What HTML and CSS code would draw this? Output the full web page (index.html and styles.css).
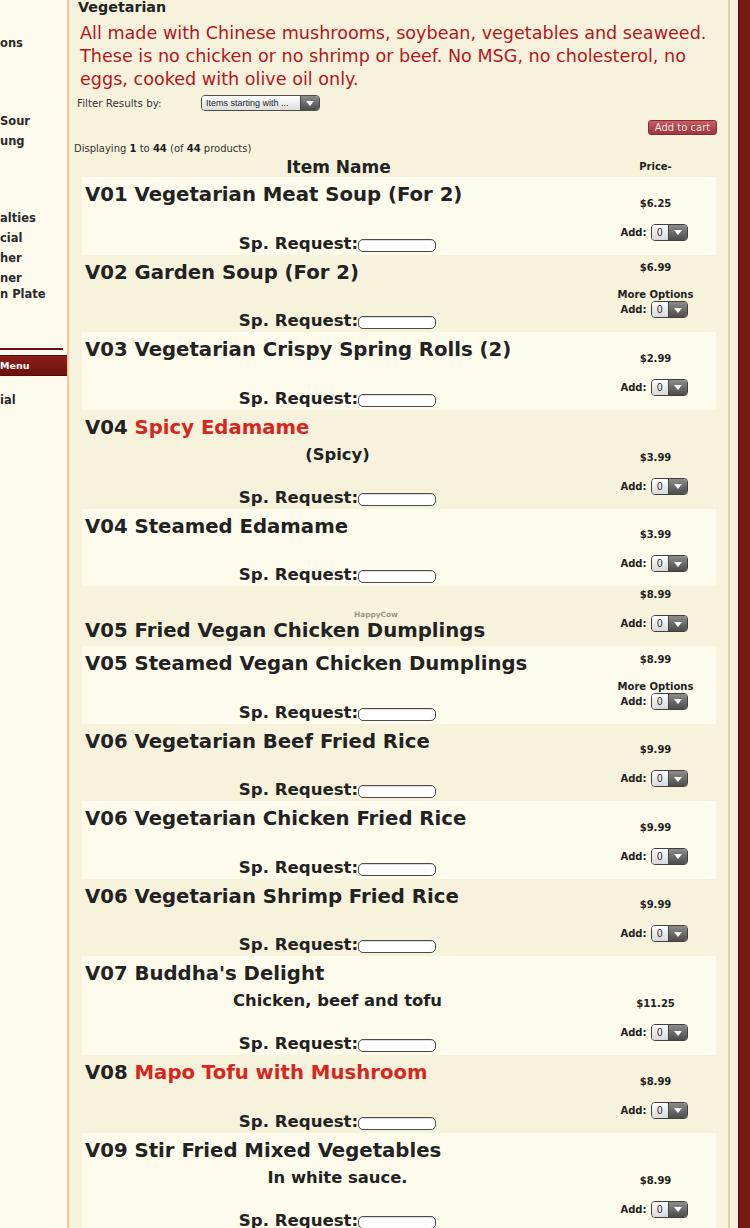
FILE: index.html
```html
<!DOCTYPE html>
<html lang="en">
<head>
    <meta charset="UTF-8">
    <meta name="viewport" content="width=device-width, initial-scale=1.0">
    <title>Vegetarian - Menu</title>
    <link rel="stylesheet" href="styles.css">
</head>
<body>
<div class="page">
    <!-- left category column (cut off by the crop) -->
    <aside class="sidebar">
        <div class="side-link">ons</div>
        <div class="side-link sep-a">Sour</div>
        <div class="side-link">ung</div>
        <div class="side-link sep-b">alties</div>
        <div class="side-link">cial</div>
        <div class="side-link">her</div>
        <div class="side-link">ner<br>n Plate</div>
        <div class="side-rule"></div>
        <div class="side-menu">Menu</div>
        <div class="side-link sep-c">ial</div>
    </aside>

    <main class="content">
        <h1 class="cat-title">Vegetarian</h1>
        <p class="cat-desc">All made with Chinese mushrooms, soybean, vegetables and seaweed. These is no chicken or no shrimp or beef. No MSG, no cholesterol, no eggs, cooked with olive oil only.</p>

        <div class="filter">
            <span class="filter-label">Filter Results by:</span>
            <span class="filter-select">
                <span class="filter-value">Items starting with ...</span>
                <span class="drop-arrow"></span>
            </span>
        </div>

        <div class="cart-bar">
            <button class="cart-btn">Add to cart</button>
        </div>

        <div class="count">Displaying <b>1</b> to <b>44</b> (of <b>44</b> products)</div>

        <div class="listing">
            <div class="listing-head">
                <div class="col-name">Item Name</div>
                <div class="col-price">Price-</div>
            </div>

            <div class="item light">
                <div class="item-main">
                    <div class="item-name">V01 Vegetarian Meat Soup (For 2)</div>
                    <div class="item-req">Sp. Request:<input class="req-input" type="text"></div>
                </div>
                <div class="item-buy">
                    <div class="price">$6.25</div>
                    <div class="qty">Add: <span class="qty-select"><span class="qty-val">0</span><span class="drop-arrow"></span></span></div>
                </div>
            </div>

            <div class="item">
                <div class="item-main">
                    <div class="item-name">V02 Garden Soup (For 2)</div>
                    <div class="item-req">Sp. Request:<input class="req-input" type="text"></div>
                </div>
                <div class="item-buy">
                    <div class="price">$6.99</div>
                    <div class="more">More Options</div>
                    <div class="qty">Add: <span class="qty-select"><span class="qty-val">0</span><span class="drop-arrow"></span></span></div>
                </div>
            </div>

            <div class="item light">
                <div class="item-main">
                    <div class="item-name">V03 Vegetarian Crispy Spring Rolls (2)</div>
                    <div class="item-req">Sp. Request:<input class="req-input" type="text"></div>
                </div>
                <div class="item-buy">
                    <div class="price">$2.99</div>
                    <div class="qty">Add: <span class="qty-select"><span class="qty-val">0</span><span class="drop-arrow"></span></span></div>
                </div>
            </div>

            <div class="item">
                <div class="item-main">
                    <div class="item-name">V04 <span class="hot">Spicy Edamame</span></div>
                    <div class="item-desc">(Spicy)</div>
                    <div class="item-req">Sp. Request:<input class="req-input" type="text"></div>
                </div>
                <div class="item-buy">
                    <div class="price">$3.99</div>
                    <div class="qty">Add: <span class="qty-select"><span class="qty-val">0</span><span class="drop-arrow"></span></span></div>
                </div>
            </div>

            <div class="item light">
                <div class="item-main">
                    <div class="item-name">V04 Steamed Edamame</div>
                    <div class="item-req">Sp. Request:<input class="req-input" type="text"></div>
                </div>
                <div class="item-buy">
                    <div class="price">$3.99</div>
                    <div class="qty">Add: <span class="qty-select"><span class="qty-val">0</span><span class="drop-arrow"></span></span></div>
                </div>
            </div>

            <div class="item">
                <div class="watermark">HappyCow</div>
                <div class="item-main">
                    <div class="item-name">V05 Fried Vegan Chicken Dumplings</div>
                </div>
                <div class="item-buy">
                    <div class="price">$8.99</div>
                    <div class="qty">Add: <span class="qty-select"><span class="qty-val">0</span><span class="drop-arrow"></span></span></div>
                </div>
            </div>

            <div class="item light">
                <div class="item-main">
                    <div class="item-name">V05 Steamed Vegan Chicken Dumplings</div>
                    <div class="item-req">Sp. Request:<input class="req-input" type="text"></div>
                </div>
                <div class="item-buy">
                    <div class="price">$8.99</div>
                    <div class="more">More Options</div>
                    <div class="qty">Add: <span class="qty-select"><span class="qty-val">0</span><span class="drop-arrow"></span></span></div>
                </div>
            </div>

            <div class="item">
                <div class="item-main">
                    <div class="item-name">V06 Vegetarian Beef Fried Rice</div>
                    <div class="item-req">Sp. Request:<input class="req-input" type="text"></div>
                </div>
                <div class="item-buy">
                    <div class="price">$9.99</div>
                    <div class="qty">Add: <span class="qty-select"><span class="qty-val">0</span><span class="drop-arrow"></span></span></div>
                </div>
            </div>

            <div class="item light">
                <div class="item-main">
                    <div class="item-name">V06 Vegetarian Chicken Fried Rice</div>
                    <div class="item-req">Sp. Request:<input class="req-input" type="text"></div>
                </div>
                <div class="item-buy">
                    <div class="price">$9.99</div>
                    <div class="qty">Add: <span class="qty-select"><span class="qty-val">0</span><span class="drop-arrow"></span></span></div>
                </div>
            </div>

            <div class="item">
                <div class="item-main">
                    <div class="item-name">V06 Vegetarian Shrimp Fried Rice</div>
                    <div class="item-req">Sp. Request:<input class="req-input" type="text"></div>
                </div>
                <div class="item-buy">
                    <div class="price">$9.99</div>
                    <div class="qty">Add: <span class="qty-select"><span class="qty-val">0</span><span class="drop-arrow"></span></span></div>
                </div>
            </div>

            <div class="item light">
                <div class="item-main">
                    <div class="item-name">V07 Buddha's Delight</div>
                    <div class="item-desc">Chicken, beef and tofu</div>
                    <div class="item-req">Sp. Request:<input class="req-input" type="text"></div>
                </div>
                <div class="item-buy">
                    <div class="price">$11.25</div>
                    <div class="qty">Add: <span class="qty-select"><span class="qty-val">0</span><span class="drop-arrow"></span></span></div>
                </div>
            </div>

            <div class="item">
                <div class="item-main">
                    <div class="item-name">V08 <span class="hot">Mapo Tofu with Mushroom</span></div>
                    <div class="item-req">Sp. Request:<input class="req-input" type="text"></div>
                </div>
                <div class="item-buy">
                    <div class="price">$8.99</div>
                    <div class="qty">Add: <span class="qty-select"><span class="qty-val">0</span><span class="drop-arrow"></span></span></div>
                </div>
            </div>

            <div class="item light">
                <div class="item-main">
                    <div class="item-name">V09 Stir Fried Mixed Vegetables</div>
                    <div class="item-desc">In white sauce.</div>
                    <div class="item-req">Sp. Request:<input class="req-input" type="text"></div>
                </div>
                <div class="item-buy">
                    <div class="price">$8.99</div>
                    <div class="qty">Add: <span class="qty-select"><span class="qty-val">0</span><span class="drop-arrow"></span></span></div>
                </div>
            </div>
        </div>
    </main>

    <div class="edge"></div>
    <div class="rim"></div>
</div>
</body>
</html>
```

FILE: styles.css
```css
/* Base */
body {
    margin: 0;
    font-family: "DejaVu Sans", Verdana, sans-serif;
    color: #222;
    background: #f7f2dc;
}

.page {
    display: flex;
    min-height: 100vh;
}

/* Sidebar */
.sidebar {
    width: 67px;
    flex-shrink: 0;
    background-color: #fdfbee;
    border-right: 2px solid #f1c79b;
    padding-top: 35px;
    display: flex;
    flex-direction: column;
    gap: 4px;
    overflow: hidden;
}

.side-link {
    font-size: 11.5px;
    font-weight: bold;
    line-height: 16px;
    color: #2a2a2a;
    white-space: nowrap;
}

.sep-a { margin-top: 58px; }
.sep-b { margin-top: 57px; }
.sep-c { margin-top: 12px; }

.side-rule {
    margin-top: 42px;
    width: 63px;
    height: 2px;
    background-color: #6a0e0c;
}

.side-menu {
    margin-top: 1px;
    height: 19px;
    line-height: 19px;
    background: linear-gradient(#8c1f1a, #6c100d);
    border-top: 1px solid #5a0b09;
    border-bottom: 1px solid #5a0b09;
    color: #fff;
    font-size: 9.5px;
    font-weight: bold;
}

/* Main column */
.content {
    flex: 1;
    min-width: 0;
    padding: 0 10px 0 5px;
    background-color: #f7f2dc;
    border-right: 2px solid #dcd2ac;
}

.cat-title {
    margin: 0;
    padding-left: 4px;
    font-size: 14.3px;
    line-height: 15px;
    font-weight: bold;
}

.cat-desc {
    margin: 7px 0 0;
    padding-left: 6px;
    font-size: 17.6px;
    line-height: 23px;
    color: #b3161c;
}

.filter {
    margin-top: 4px;
    padding-left: 3px;
    display: flex;
    align-items: center;
    height: 16px;
}

.filter-label {
    width: 124px;
    font-size: 10.3px;
    color: #333;
}

.filter-select {
    display: inline-flex;
    width: 119px;
    height: 16px;
    box-sizing: border-box;
    border: 1px solid #4b4b4b;
    border-radius: 4px;
    overflow: hidden;
}

.filter-value {
    flex: 1;
    padding-left: 4px;
    font-family: "Liberation Sans", Arial, sans-serif;
    font-size: 9px;
    line-height: 14px;
    color: #222;
    background: linear-gradient(#ffffff, #dedede);
}

.drop-arrow {
    width: 18px;
    position: relative;
    background: linear-gradient(#8c8c8c, #4c4c4c);
    border-left: 1px solid #444;
}

.drop-arrow:after {
    content: '';
    position: absolute;
    left: 50%;
    top: 50%;
    margin: -2px 0 0 -4px;
    border-left: 4px solid transparent;
    border-right: 4px solid transparent;
    border-top: 5px solid #fff;
}

.cart-bar {
    margin-top: 9px;
    padding-right: 1px;
    display: flex;
    justify-content: flex-end;
}

.cart-btn {
    width: 69px;
    height: 15px;
    padding: 0;
    border: 1px solid #8b2a30;
    border-radius: 3px;
    background: linear-gradient(#c85c62, #a0363f);
    color: #fbeeee;
    font-family: "DejaVu Sans", Verdana, sans-serif;
    font-size: 10px;
    line-height: 13px;
    text-shadow: 0 0 1px #6d1a1f;
}

.count {
    margin-top: 8px;
    font-size: 10px;
    line-height: 12px;
    color: #333;
}

.count b { color: #222; }

/* Product listing */
.listing {
    margin: 2px 2px 0 8px;
}

.listing-head {
    display: flex;
    height: 20px;
    line-height: 20px;
    font-weight: bold;
}

.col-name {
    flex: 1;
    text-align: center;
    font-size: 17px;
}

.col-price {
    width: 121px;
    text-align: center;
    font-size: 10px;
}

.item {
    position: relative;
    display: flex;
    align-items: flex-end;
}

.item.light {
    background-color: #fdfbec;
}

.item-main {
    flex: 1;
    padding: 4px 5px 1px 3px;
}

.item-name {
    font-size: 19.7px;
    line-height: 28px;
    font-weight: bold;
    white-space: nowrap;
}

.hot { color: #d7261d; }

.item-desc {
    margin-top: 3px;
    text-align: center;
    font-size: 16.4px;
    line-height: 20px;
    font-weight: bold;
}

.item-req {
    margin-top: 24.5px;
    text-align: center;
    font-size: 16.6px;
    line-height: 20px;
    font-weight: bold;
}

.item-desc + .item-req {
    margin-top: 23px;
}

.req-input {
    width: 78px;
    height: 13px;
    box-sizing: border-box;
    margin: 0;
    padding: 0;
    border: 1px solid #4a4a4a;
    border-radius: 5px;
    background: #fff;
    box-shadow: inset 0 1px 1px rgba(0, 0, 0, 0.15);
    vertical-align: -1px;
}

.item-buy {
    width: 121px;
    flex-shrink: 0;
    padding: 2px 0 14px;
    text-align: center;
    font-size: 10px;
    font-weight: bold;
}

.price {
    line-height: 13px;
    margin-bottom: 14px;
}

.more {
    line-height: 13px;
}

.qty {
    display: flex;
    justify-content: center;
    align-items: center;
    gap: 4px;
    height: 17px;
    margin-left: -3px;
}

.qty-select {
    display: inline-flex;
    width: 37px;
    height: 17px;
    box-sizing: border-box;
    border: 1px solid #3f3f3f;
    border-radius: 4px;
    overflow: hidden;
}

.qty-val {
    width: 17px;
    font-family: "Liberation Sans", Arial, sans-serif;
    font-size: 10px;
    font-weight: normal;
    line-height: 15px;
    background: linear-gradient(#ffffff, #d8d8d8);
}

.watermark {
    position: absolute;
    left: 272px;
    top: 24px;
    font-size: 7.4px;
    font-weight: bold;
    color: #9a9788;
}

/* Right page edge */
.edge {
    width: 8px;
    background-color: #f7f2dc;
}

.rim {
    width: 11px;
    background-color: #761a12;
    border-left: 1px solid #4d0c08;
}
```
